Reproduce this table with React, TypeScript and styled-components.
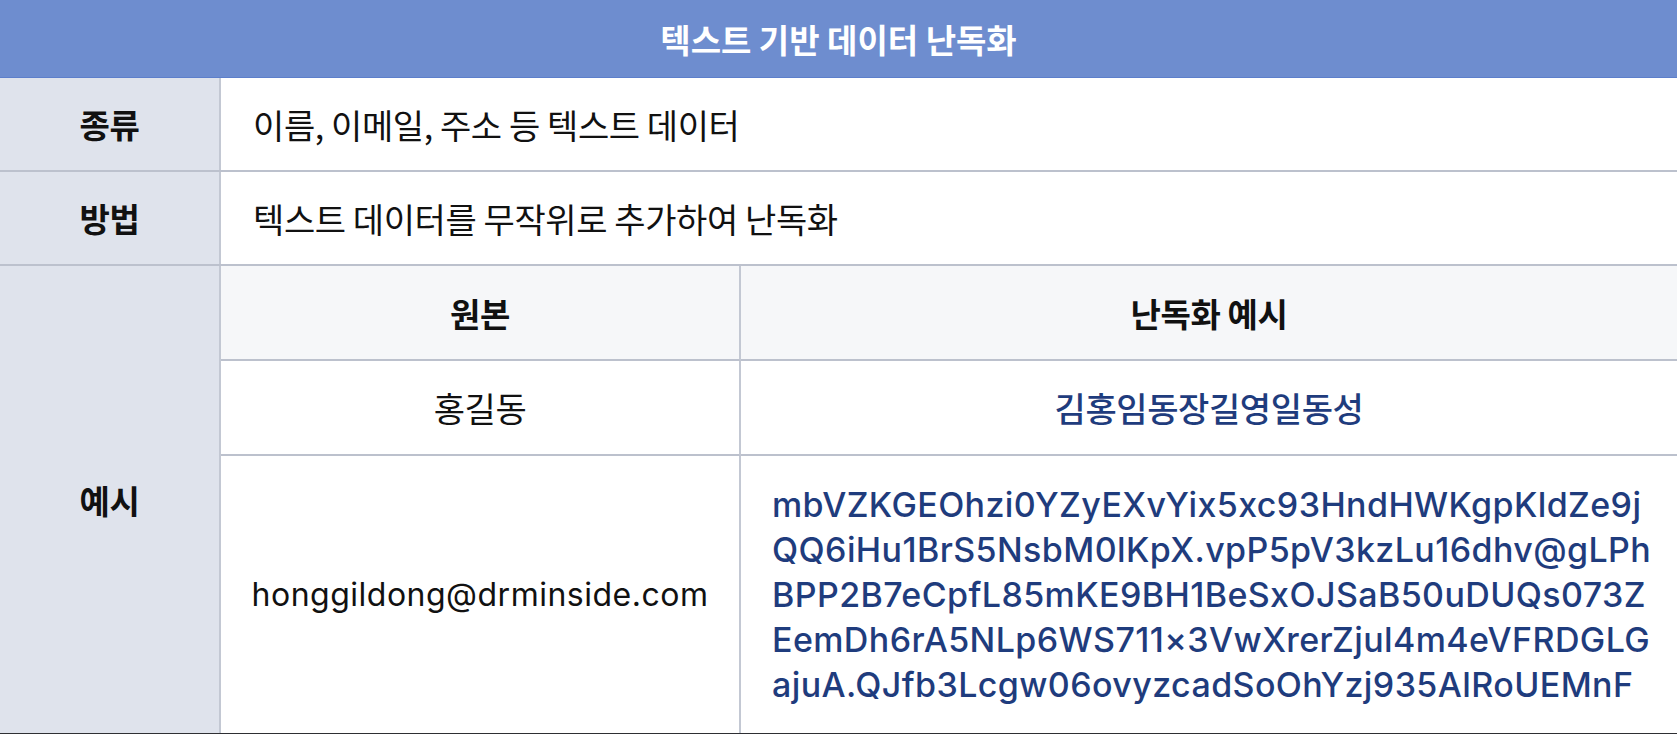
import React from "react";
import styled, { createGlobalStyle } from "styled-components";

const GlobalStyle = createGlobalStyle`
  html, body {
    margin: 0;
    padding: 0;
    background: #ffffff;
  }
  body {
    font-family: "Inter", "Noto Sans CJK KR", sans-serif;
    color: #111111;
  }
`;

const LINE = "#bcc1cd";

const Table = styled.div`
  width: 1677px;
  display: flex;
  flex-direction: column;
  border-bottom: 2px solid #2e2f33;
`;

const TitleBar = styled.div`
  height: 77px;
  display: flex;
  align-items: center;
  justify-content: center;
  background: #6e8dcf;
  border-bottom: 1px solid #5d7fcb;
  color: #ffffff;
  font-family: "Noto Sans CJK KR", sans-serif;
  font-size: 33px;
  font-weight: 600;
  letter-spacing: 0;
`;

const Row = styled.div<{ $height?: number }>`
  display: grid;
  grid-template-columns: 221px 1fr;
  min-height: ${(p) => p.$height ?? 92}px;
  border-bottom: 2px solid ${LINE};
  &:last-child {
    border-bottom: none;
  }
`;

const Label = styled.div`
  display: flex;
  align-items: center;
  justify-content: center;
  background: #dfe3ec;
  border-right: 2px solid #c3c8d3;
  font-family: "Noto Sans CJK KR", sans-serif;
  font-size: 33px;
  font-weight: 700;
  color: #111111;
  letter-spacing: -0.4px;
`;

const Value = styled.div`
  display: flex;
  align-items: center;
  padding: 0 32px;
  font-family: "Noto Sans CJK KR", sans-serif;
  font-size: 34px;
  font-weight: 400;
  color: #111111;
  letter-spacing: -0.4px;
`;

const SubTable = styled.div`
  display: grid;
  grid-template-columns: 520px 1fr;
`;

const SubCell = styled.div<{ $head?: boolean; $last?: boolean; $right?: boolean }>`
  display: flex;
  align-items: center;
  justify-content: center;
  min-height: 93px;
  background: ${(p) => (p.$head ? "#f6f7f9" : "#ffffff")};
  border-bottom: ${(p) => (p.$last ? "none" : `2px solid ${LINE}`)};
  border-right: ${(p) => (p.$right ? "none" : `2px solid #c3c8d3`)};
  font-family: "Noto Sans CJK KR", sans-serif;
  font-size: ${(p) => (p.$head ? 33 : 34)}px;
  font-weight: ${(p) => (p.$head ? 700 : 400)};
  color: #111111;
  letter-spacing: -0.4px;
`;

const Obfuscated = styled.span`
  color: #1f3c7d;
  font-family: "Noto Sans CJK KR", sans-serif;
  font-size: 34px;
  font-weight: 500;
`;

const EmailText = styled.span`
  font-family: "Inter", sans-serif;
  font-size: 32px;
  font-weight: 400;
  color: #111111;
  letter-spacing: 0.5px;
`;

const RandomCell = styled.div`
  display: flex;
  flex-direction: column;
  justify-content: center;
  padding: 26px 0 26px 31px;
  background: #ffffff;
  overflow: hidden;
`;

const RandomLine = styled.div`
  font-family: "Inter", sans-serif;
  font-size: 34px;
  font-weight: 500;
  line-height: 45px;
  color: #1f3c7d;
  white-space: nowrap;
  letter-spacing: 0.4px;
`;

const randomLines = [
  "mbVZKGEOhzi0YZyEXvYix5xc93HndHWKgpKldZe9j",
  "QQ6iHu1BrS5NsbM0lKpX.vpP5pV3kzLu16dhv@gLPh",
  "BPP2B7eCpfL85mKE9BH1BeSxOJSaB50uDUQs073Z",
  "EemDh6rA5NLp6WS711×3VwXrerZjul4m4eVFRDGLG",
  "ajuA.QJfb3Lcgw06ovyzcadSoOhYzj935AlRoUEMnF",
];

export default function App() {
  return (
    <>
      <GlobalStyle />
      <Table>
        <TitleBar>텍스트 기반 데이터 난독화</TitleBar>
        <Row>
          <Label>종류</Label>
          <Value>이름, 이메일, 주소 등 텍스트 데이터</Value>
        </Row>
        <Row>
          <Label>방법</Label>
          <Value>텍스트 데이터를 무작위로 추가하여 난독화</Value>
        </Row>
        <Row>
          <Label>예시</Label>
          <SubTable>
            <SubCell $head>원본</SubCell>
            <SubCell $head $right>
              난독화 예시
            </SubCell>
            <SubCell>홍길동</SubCell>
            <SubCell $right>
              <Obfuscated>김홍임동장길영일동성</Obfuscated>
            </SubCell>
            <SubCell $last>
              <EmailText>honggildong@drminside.com</EmailText>
            </SubCell>
            <RandomCell>
              {randomLines.map((l) => (
                <RandomLine key={l}>{l}</RandomLine>
              ))}
            </RandomCell>
          </SubTable>
        </Row>
      </Table>
    </>
  );
}
